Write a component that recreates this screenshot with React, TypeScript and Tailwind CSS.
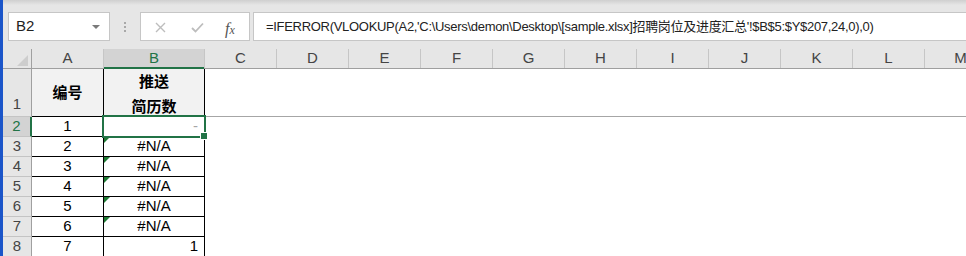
import React from "react";

const COLS = ["C", "D", "E", "F", "G", "H", "I", "J", "K", "L", "M"];
const FONT = { fontFamily: '"Liberation Sans", "Noto Sans CJK SC", sans-serif' };
const CJK = { fontFamily: '"Noto Sans CJK SC", "Liberation Sans", sans-serif' };

function RowHeader({ n, selected, tall }: { n: number; selected?: boolean; tall?: boolean }) {
  return (
    <div
      className={
        "w-[29px] shrink-0 flex justify-center border-b border-b-[#c4c4c4] text-[15px] " +
        (tall ? "items-end pb-[1px] " : "items-center ") +
        (selected
          ? "bg-[#d3d3d3] text-[#217346] border-r-2 border-r-[#217346]"
          : "bg-[#e6e6e6] text-[#444] border-r border-r-[#a0a0a0]")
      }
    >
      {n}
    </div>
  );
}

function Tri() {
  return (
    <div className="absolute left-0 top-0 w-0 h-0 border-t-[6px] border-t-[#1e7b34] border-r-[6px] border-r-transparent" />
  );
}

export default function App() {
  const body = [
    { n: 2, a: "1", b: "-", kind: "dash" },
    { n: 3, a: "2", b: "#N/A", kind: "err" },
    { n: 4, a: "3", b: "#N/A", kind: "err" },
    { n: 5, a: "4", b: "#N/A", kind: "err" },
    { n: 6, a: "5", b: "#N/A", kind: "err" },
    { n: 7, a: "6", b: "#N/A", kind: "err" },
    { n: 8, a: "7", b: "1", kind: "num" },
  ];
  return (
    <div className="relative flex w-[966px] h-[256px] overflow-hidden bg-white" style={FONT}>
      <div className="w-[3px] shrink-0 bg-[#1b55c9]" />
      <div className="flex-1 flex flex-col min-w-0">
        {/* toolbar */}
        <div className="h-[49px] shrink-0 bg-[#e6e6e6] relative flex items-start pt-[12px] pl-[5px]">
          <div className="absolute left-0 right-0 top-0 h-[5px] bg-gradient-to-b from-[#cfcfcf] to-[#e6e6e6]" />
          <div className="relative w-[102px] h-[29px] bg-white border border-[#c6c6c6] flex items-center pl-[7px] text-[15px] text-[#222]">
            B2
            <div className="absolute right-[9px] top-[12px] w-0 h-0 border-l-[4px] border-r-[4px] border-t-[4px] border-l-transparent border-r-transparent border-t-[#7a7a7a]" />
          </div>
          <div className="w-[30px] h-[29px] flex flex-col items-center justify-center gap-[2px]">
            <div className="w-[2px] h-[2px] bg-[#a8a8a8]" />
            <div className="w-[2px] h-[2px] bg-[#a8a8a8]" />
            <div className="w-[2px] h-[2px] bg-[#a8a8a8]" />
          </div>
          <div className="w-[110px] h-[29px] bg-white border border-[#c6c6c6] flex items-center relative">
            <svg className="absolute left-[14px] top-[9px]" width="11" height="11" viewBox="0 0 11 11">
              <path d="M1 1 L10 10 M10 1 L1 10" stroke="#bdbdbd" strokeWidth="1.4" fill="none" />
            </svg>
            <svg className="absolute left-[50px] top-[9px]" width="13" height="11" viewBox="0 0 13 11">
              <path d="M1 6 L4.5 9.5 L12 1.5" stroke="#bdbdbd" strokeWidth="1.8" fill="none" />
            </svg>
            <div className="absolute left-[84px] top-[4px] text-[#555] italic" style={{ fontFamily: '"Liberation Serif", serif' }}>
              <span className="text-[16px]">f</span>
              <span className="text-[12px]">x</span>
            </div>
          </div>
          <div className="ml-[3px] flex-1 h-[29px] bg-white border border-[#c6c6c6] border-r-0 flex items-center pl-[12px] text-[13px] tracking-[-0.3px] text-[#222] whitespace-nowrap overflow-hidden">
            =IFERROR(VLOOKUP(A2,'C:\Users\demon\Desktop\[sample.xlsx]招聘岗位及进度汇总'!$B$5:$Y$207,24,0),0)
          </div>
        </div>
        {/* column header */}
        <div className="h-[20px] shrink-0 flex bg-[#e6e6e6] border-b border-b-[#9f9f9f] text-[15px] text-[#444]">
          <div className="w-[29px] shrink-0 border-r border-r-[#a0a0a0] relative">
            <div className="absolute right-[3px] bottom-[2px] w-0 h-0 border-l-[11px] border-l-transparent border-b-[11px] border-b-[#cdcdcd]" />
          </div>
          <div className="w-[72px] shrink-0 border-r border-r-[#c6c6c6] flex items-center justify-center">A</div>
          <div className="w-[101px] shrink-0 border-r border-r-[#c6c6c6] bg-[#d3d3d3] text-[#217346] flex items-center justify-center relative">
            B
            <div className="absolute left-0 right-0 bottom-[-1px] h-[2px] bg-[#217346]" />
          </div>
          {COLS.map((c) => (
            <div key={c} className="w-[72px] shrink-0 border-r border-r-[#c6c6c6] flex items-center justify-center">
              {c}
            </div>
          ))}
        </div>
        {/* row 1 */}
        <div className="h-[48px] shrink-0 flex">
          <RowHeader n={1} tall />
          <div className="w-[72px] shrink-0 bg-[#f2f2f2] border-r border-b border-black flex items-center justify-center font-bold text-[15px] text-black" style={CJK}>
            编号
          </div>
          <div className="w-[101px] shrink-0 bg-[#f2f2f2] border-r border-b border-black flex flex-col items-center justify-center font-bold text-[15px] leading-[25px] text-black" style={CJK}>
            <span>推送</span>
            <span>简历数</span>
          </div>
          <div className="flex-1 border-b border-b-[#a6a6a6]" />
        </div>
        {body.map((r) => (
          <div key={r.n} className="h-[20px] shrink-0 flex text-[15px]">
            <RowHeader n={r.n} selected={r.n === 2} />
            <div className="w-[72px] shrink-0 border-r border-b border-black flex items-center justify-center text-black">
              {r.a}
            </div>
            <div
              className={
                "w-[101px] shrink-0 border-r border-b border-black flex items-center relative " +
                (r.kind === "err" ? "justify-center " : "justify-end pr-[6px] ") +
                (r.kind === "dash" ? "text-[#a6a6a6]" : "text-black")
              }
            >
              {r.kind === "err" && <Tri />}
              {r.b}
            </div>
            <div className="flex-1" />
          </div>
        ))}
      </div>
      {/* selection */}
      <div className="absolute left-[102px] top-[115px] w-[104px] h-[23px] border-2 border-[#217346]" />
      <div className="absolute left-[200px] top-[132px] w-[8px] h-[8px] bg-[#217346] border border-white" />
    </div>
  );
}
